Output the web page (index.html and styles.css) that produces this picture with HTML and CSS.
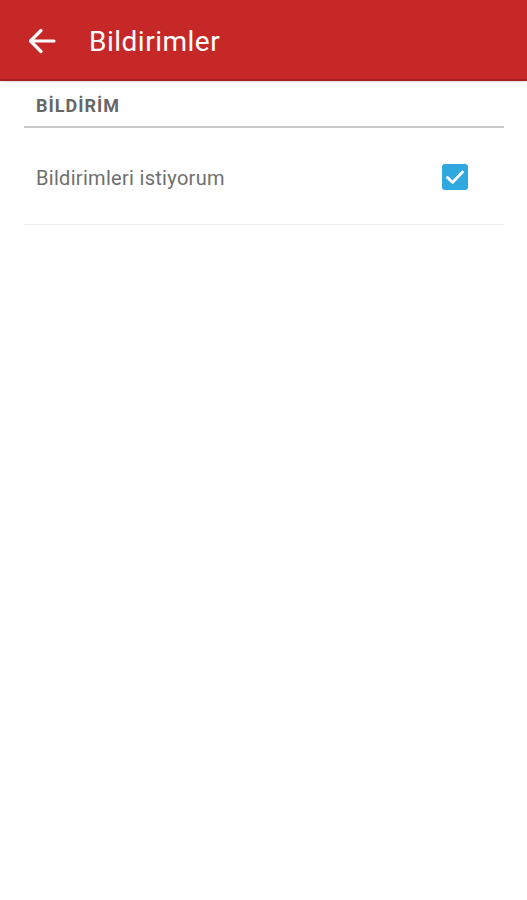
FILE: index.html
```html
<!DOCTYPE html>
<html lang="tr">
<head>
    <meta charset="UTF-8">
    <meta name="viewport" content="width=device-width, initial-scale=1.0">
    <title>Bildirimler</title>
    <link rel="stylesheet" href="styles.css">
</head>
<body>

    <div class="toolbar">
        <svg class="back" width="28" height="26" viewBox="0 0 28 26">
            <path d="M26 13H3M13 2.5L2.5 13L13 23.5" fill="none" stroke="#fff" stroke-width="3.2" stroke-linecap="round" stroke-linejoin="round"/>
        </svg>
        <h1>Bildirimler</h1>
    </div>

    <div class="prefs">
        <div class="category">BİLDİRİM</div>
        <div class="pref-row">
            <span class="pref-title">Bildirimleri istiyorum</span>
            <span class="checkbox">
                <svg width="26" height="26" viewBox="0 0 26 26">
                    <rect x="0" y="0" width="26" height="26" rx="3" fill="#2fa8df"/>
                    <path d="M5.5 13.5L10.5 18.5L20.5 8" fill="none" stroke="#fff" stroke-width="2.8" stroke-linecap="round" stroke-linejoin="round"/>
                </svg>
            </span>
        </div>
    </div>

</body>
</html>
```

FILE: styles.css
```css
body {
    margin: 0;
    padding: 0;
    font-family: Roboto, 'Noto Sans', sans-serif;
    background: #fff;
}
.toolbar {
    height: 76px;
    padding: 3px 0 0 28px;
    background: #c62828;
    border-bottom: 2px solid #a81f1f;
    display: flex;
    align-items: center;
    box-shadow: 0 1px 2px rgba(0, 0, 0, 0.15);
}
.back {
    display: block;
}
.toolbar h1 {
    margin: 0 0 0 33px;
    font-size: 28px;
    font-weight: 400;
    color: #fff;
    letter-spacing: 0.5px;
}
.prefs {
    margin: 0 23px 0 24px;
}
.category {
    padding: 14px 0 0 12px;
    height: 31px;
    border-bottom: 2px solid #c9c9c9;
    font-size: 18px;
    font-weight: 700;
    color: #666;
    letter-spacing: 1px;
}
.pref-row {
    height: 96px;
    display: flex;
    align-items: center;
    justify-content: space-between;
    padding: 0 36px 0 12px;
    border-bottom: 1px solid #ececec;
}
.pref-title {
    font-size: 20px;
    color: #6f6f6f;
    margin-top: 4px;
    letter-spacing: 0.3px;
}
.checkbox svg {
    display: block;
    margin-top: 2px;
}
```
